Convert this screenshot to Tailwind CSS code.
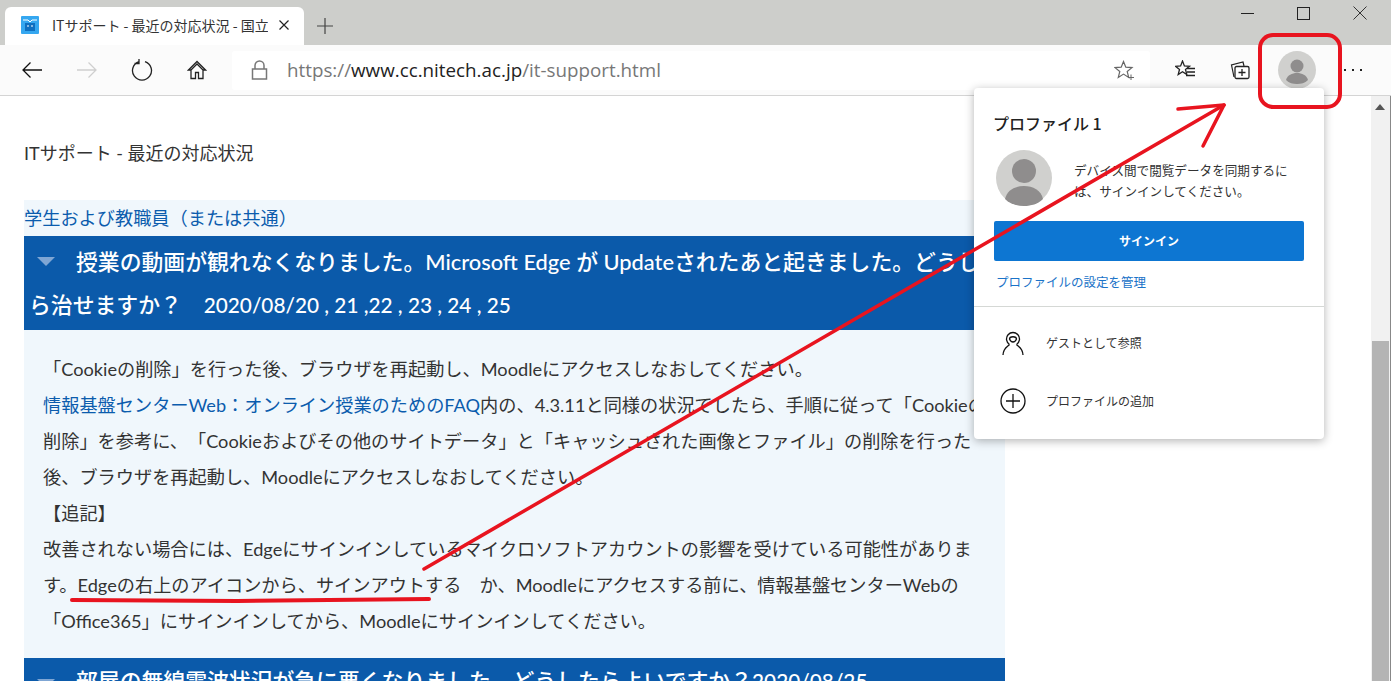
<!DOCTYPE html>
<html lang="ja">
  <head>
    <meta charset="UTF-8" />
    <title>ITサポート</title>
    <script src="https://cdn.jsdelivr.net/npm/@tailwindcss/browser@4"></script>
  </head>
  <body class="relative h-[681px] w-[1391px] overflow-hidden bg-white font-['Lato','Noto_Sans_CJK_JP',sans-serif] text-[#333] [text-spacing-trim:space-all]">
    <!-- tab strip -->
    <div class="flex h-[45px] items-end bg-[#cdcecb] pl-[5px]">
      <div class="flex h-[38px] w-[299px] items-center rounded-t-[6px] bg-white pb-[2px] pl-[15px] pr-[10px]">
        <svg class="h-[20px] w-[20px] shrink-0" viewBox="0 0 20 20">
          <rect x="1" y="1" width="18" height="18" rx="1" fill="#35a7f0" />
          <path d="M3 5h5M12 5h5M8 5l2 2 2-2" stroke="#fff" fill="none" />
          <rect x="5" y="8" width="10" height="8" fill="#0f6fc0" />
          <path d="M8 10v2M12 10v2" stroke="#fff" />
        </svg>
        <span class="ml-[12px] w-[216px] overflow-hidden whitespace-nowrap font-['Noto_Sans_CJK_JP',sans-serif] text-[14px] text-[#333]">ITサポート - 最近の対応状況 - 国立</span>
        <svg class="ml-[11px] h-[10px] w-[10px] shrink-0" viewBox="0 0 10 10"><path d="M0.5 0.5l9 9M9.5 0.5l-9 9" stroke="#222" stroke-width="1.2" /></svg>
      </div>
      <svg class="mb-[11px] ml-[13px] h-[16px] w-[16px]" viewBox="0 0 16 16"><path d="M8 0v16M0 8h16" stroke="#444" stroke-width="1.2" /></svg>
    </div>

    <!-- window controls -->
    <div class="absolute right-0 top-0 flex h-[28px] items-center">
      <span class="absolute left-[-150px] top-[13px] h-px w-[13px] bg-[#222]"></span>
      <span class="absolute left-[-94px] top-[7px] h-[13px] w-[13px] border border-[#222]"></span>
      <svg class="absolute left-[-38px] top-[6px] h-[14px] w-[14px]" viewBox="0 0 14 14"><path d="M0.5 0.5l13 13M13.5 0.5l-13 13" stroke="#333" stroke-width="1" /></svg>
    </div>

    <!-- toolbar -->
    <div class="flex h-[51px] items-center border-b border-[#d4d4d4] bg-[#fbfbfb]">
      <div class="flex w-[232px] items-center">
        <svg class="ml-[21px] h-[18px] w-[22px]" viewBox="0 0 22 18"><path d="M21 9H2M9.500 1.500L2 9l7.500 7.500" stroke="#111" stroke-width="1.300" fill="none" /></svg>
        <svg class="ml-[33px] h-[18px] w-[22px]" viewBox="0 0 22 18"><path d="M1 9h19M12.500 1.500L20 9l-7.500 7.500" stroke="#cfcfcf" stroke-width="1.300" fill="none" /></svg>
        <svg class="ml-[33px] h-[24px] w-[22px]" viewBox="0 0 22 24"><path d="M8 3.600A9.500 9.500 0 1 0 14 3.600M8 1v4.500H3.500" stroke="#222" stroke-width="1.300" fill="none" /></svg>
        <svg class="ml-[34px] h-[20px] w-[20px]" viewBox="0 0 20 20"><path d="M10 1.500L1.500 10H4v8.500h4.500V12.500h3v6H16V10h2.500zM4 10l6-6 6 6" stroke="#222" stroke-width="1.300" fill="none" /></svg>
      </div>
      <div class="flex h-[39px] w-[918px] items-center rounded-[3px] bg-white pl-[19px] pr-[16px]">
        <svg class="h-[20px] w-[17px] shrink-0" viewBox="0 0 17 20"><path d="M4 9V5.500a4.500 4.500 0 0 1 9 0V9M1.500 9h14v10h-14z" stroke="#777" stroke-width="1.500" fill="none" /></svg>
        <span class="ml-[19px] font-['Open_Sans',sans-serif] text-[18.800px] text-[#777]">https://<span class="text-[#222]">www.cc.nitech.ac.jp</span>/it-support.html</span>
        <svg class="ml-auto h-[20px] w-[20px]" viewBox="0 0 20 20"><path d="M9.500 1.500l2.300 5.700 6.200.4-4.800 3.900 1.500 5.900-5.200-3.300-5.200 3.300 1.500-5.900L1 7.600l6.200-.4z" stroke="#666" stroke-width="1.200" fill="none" /><path d="M14 17.500h6M17 14.500v6" stroke="#666" /></svg>
      </div>
      <svg class="ml-[25px] h-[20px] w-[20px]" viewBox="0 0 20 20"><path d="M7.500 1l1.900 5 5.100.3-4 3.200 1.300 5-4.300-2.800-4.300 2.800 1.300-5-4-3.200 5.100-.3z" stroke="#222" stroke-width="1.300" fill="none" /><path d="M12 8.500h8M12 12h8M11 15.500h9" stroke="#222" stroke-width="1.300" /></svg>
      <svg class="ml-[35px] h-[20px] w-[20px]" viewBox="0 0 20 20"><path d="M4 17L1.500 5 13 2l1 4" stroke="#222" stroke-width="1.200" fill="none" /><rect x="5" y="6.500" width="14" height="12" rx="1.500" fill="#fff" stroke="#222" stroke-width="1.300" /><path d="M12 9v7M8.500 12.500h7" stroke="#222" stroke-width="1.300" /></svg>
      <svg class="ml-[28px] h-[38px] w-[38px]" viewBox="0 0 38 38"><circle cx="19" cy="19" r="19" fill="#d0d0ce" /><circle cx="19" cy="15" r="6.500" fill="#8f8d8d" /><path d="M8 29c1.500-5 6-7 11-7s9.500 2 11 7c-3 3-7 4-11 4s-8-1-11-4z" fill="#8f8d8d" /></svg>
      <div class="ml-[28px] flex gap-[3px]">
        <span class="h-[2px] w-[2px] bg-[#222]"></span><span class="ml-[3px] h-[2px] w-[2px] bg-[#222]"></span><span class="ml-[3px] h-[2px] w-[2px] bg-[#222]"></span>
      </div>
    </div>

    <!-- page -->
    <div class="flex h-[585px]">
      <main class="w-[1371px] pl-[24px]">
        <p class="pt-[45px] text-[18px] leading-[24px]">ITサポート - 最近の対応状況</p>
        <div class="mt-[35px] w-[981px] bg-[#f0f7fc]">
          <h2 class="pt-[3px] pb-[3px] text-[18.200px] leading-[30px] text-[#0b5cad]">学生および教職員（または共通）</h2>
          <div class="h-[94px] overflow-hidden bg-[#0b5aaa] text-[21.840px] font-medium leading-[43px] text-white">
            <div class="flex items-center whitespace-nowrap pt-[4px]">
              <span class="ml-[13px] h-0 w-0 shrink-0 border-x-[9px] border-t-[9px] border-x-transparent border-t-[#7fa6d4]"></span>
              <span class="ml-[21px]">授業の動画が観れなくなりました。Microsoft Edge が Updateされたあと起きました。どうした</span>
            </div>
            <div class="whitespace-pre pl-[5px]">ら治せますか？　<span class="text-[20.800px]">2020/08/20 , 21 ,22 , 23 , 24 , 25</span></div>
          </div>
          <div class="h-[328px] pl-[19px] pr-[24px] pt-[21px] text-[18.200px] leading-[36px]">
            <p class="whitespace-nowrap">「Cookieの削除」を行った後、ブラウザを再起動し、Moodleにアクセスしなおしてください。</p>
            <p class="whitespace-nowrap"><span class="text-[#0b5cad]">情報基盤センターWeb：オンライン授業のためのFAQ</span>内の、4.3.11と同様の状況でしたら、手順に従って「Cookieの</p>
            <p class="whitespace-nowrap">削除」を参考に、「Cookieおよびその他のサイトデータ」と「キャッシュされた画像とファイル」の削除を行った</p>
            <p class="whitespace-nowrap">後、ブラウザを再起動し、Moodleにアクセスしなおしてください。</p>
            <p class="whitespace-nowrap">【追記】</p>
            <p class="whitespace-nowrap">改善されない場合には、Edgeにサインインしているマイクロソフトアカウントの影響を受けている可能性がありま</p>
            <p class="whitespace-pre">す。Edgeの右上のアイコンから、サインアウトする　か、Moodleにアクセスする前に、情報基盤センターWebの</p>
            <p class="whitespace-nowrap">「Office365」にサインインしてから、Moodleにサインインしてください。</p>
          </div>
          <div class="flex h-[30px] items-start overflow-hidden whitespace-nowrap bg-[#0b5aaa] pt-[1px] text-[21.840px] font-medium leading-[43px] text-white">
            <span class="ml-[13px] mt-[20px] h-0 w-0 shrink-0 border-x-[9px] border-t-[9px] border-x-transparent border-t-[#7fa6d4]"></span>
            <span class="ml-[21px]">部屋の無線電波状況が急に悪くなりました。どうしたらよいですか？<span class="text-[20.800px]">2020/08/25</span></span>
          </div>
        </div>
      </main>
      <!-- scrollbar -->
      <div class="relative w-[20px] border-r border-[#888] bg-[#f1f1f1]">
        <span class="absolute left-[4px] top-[8px] h-0 w-0 border-x-[5px] border-b-[6px] border-x-transparent border-b-[#555]"></span>
        <div class="absolute left-[1px] top-[245px] h-[340px] w-[17px] bg-[#b4b4b4]"></div>
      </div>
    </div>

    <!-- profile flyout -->
    <div class="absolute left-[974px] top-[88px] h-[351px] w-[350px] rounded-[4px] bg-white shadow-[0_2px_10px_rgba(0,0,0,0.3)]">
      <p class="pl-[19px] pt-[21px] font-['Noto_Sans_CJK_JP',sans-serif] text-[16px] font-medium leading-[28px] text-[#222]">プロファイル 1</p>
      <div class="mt-[13px] flex items-center pl-[22px]">
        <svg class="h-[56px] w-[56px]" viewBox="0 0 56 56"><circle cx="28" cy="28" r="28" fill="#d0d0ce" /><circle cx="28" cy="21" r="12" fill="#8f8d8d" /><path d="M9 49c2-9 10-13 19-13s17 4 19 13c-5 5-12 7-19 7s-14-2-19-7z" fill="#8f8d8d" /></svg>
        <p class="ml-[22px] mt-[3px] w-[220px] font-['Noto_Sans_CJK_JP',sans-serif] text-[12.600px] leading-[21px] text-[#333]">デバイス間で閲覧データを同期するには、サインインしてください。</p>
      </div>
      <button class="ml-[20px] mt-[15px] h-[40px] w-[310px] rounded-[2px] bg-[#0d76d2] font-['Noto_Sans_CJK_JP',sans-serif] text-[12px] font-bold text-white">サインイン</button>
      <p class="pl-[22px] pt-[11px] font-['Noto_Sans_CJK_JP',sans-serif] text-[12.500px] leading-[20px] text-[#1a73c8]">プロファイルの設定を管理</p>
      <div class="mt-[14px] border-t border-[#d5d8d5]"></div>
      <div class="mt-[7px] flex h-[58px] items-center pl-[28px]">
        <svg class="h-[24px] w-[22px]" viewBox="0 0 22 24"><path d="M7.500 13.500a6.500 6.500 0 1 1 7 0M7.500 8c0-3 7-3 7 0-1 2.500-2.500 3-3.500 3s-2.500-.5-3.500-3zM7.500 13.500c-2 2.500-6 3-6.500 10.500M14.500 13.500c2 2.500 6 3 6.500 10.500" fill="none" stroke="#111" stroke-width="1.300" /></svg>
        <span class="ml-[22px] font-['Noto_Sans_CJK_JP',sans-serif] text-[12px] text-[#333]">ゲストとして参照</span>
      </div>
      <div class="flex h-[58px] items-center pl-[26px]">
        <svg class="h-[26px] w-[26px]" viewBox="0 0 26 26"><circle cx="13" cy="13" r="12" fill="none" stroke="#111" stroke-width="1.300" /><path d="M13 6v14M6 13h14" stroke="#111" stroke-width="1.300" /></svg>
        <span class="ml-[20px] font-['Noto_Sans_CJK_JP',sans-serif] text-[12px] text-[#333]">プロファイルの追加</span>
      </div>
    </div>

    <!-- red annotations drawn on the screenshot -->
    <svg class="absolute left-0 top-0 h-[681px] w-[1391px]" viewBox="0 0 1391 681" fill="none" stroke="#e8141f" stroke-linecap="round">
      <rect x="1260" y="35" width="80" height="72" rx="13" stroke-width="4" />
      <path d="M424 569L1224 105" stroke-width="3.500" />
      <path d="M1178 109l46-4-21 41" stroke-width="3.500" stroke-linejoin="round" />
      <path d="M72 600l165 1 192-2" stroke-width="4" />
    </svg>
  </body>
</html>
